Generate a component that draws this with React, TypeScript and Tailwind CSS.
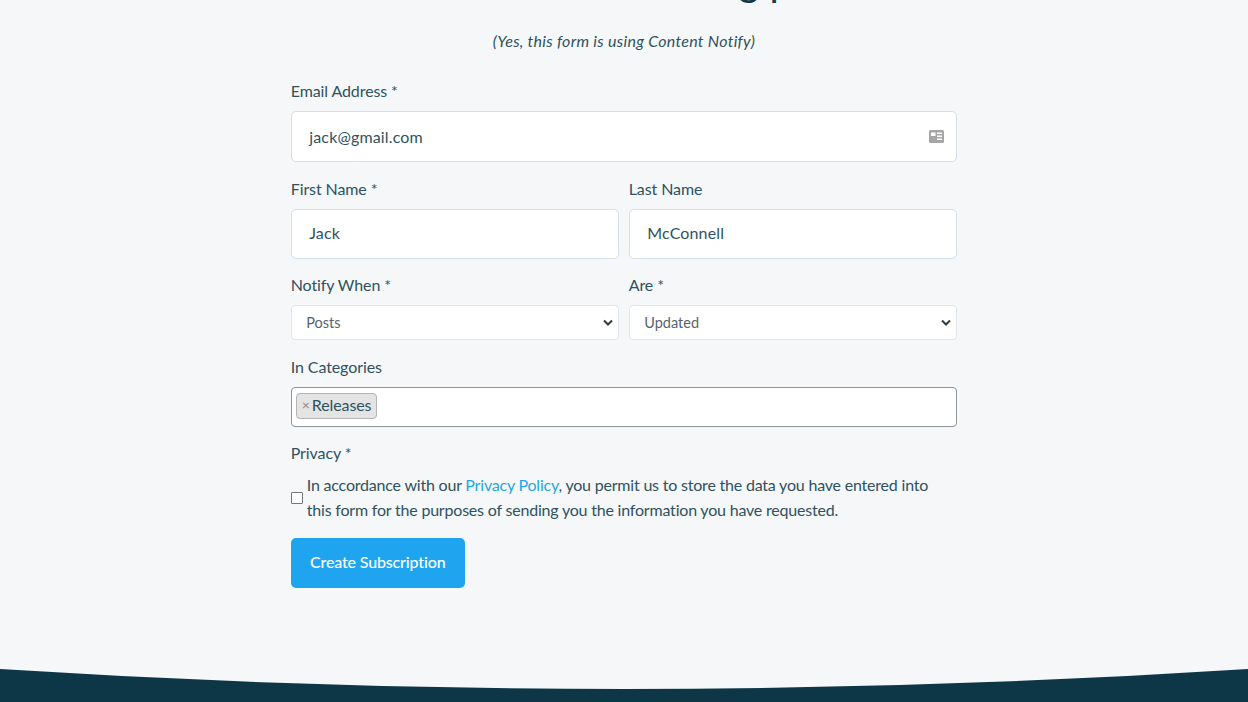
import React from "react";

function Label({ children }: { children: React.ReactNode }) {
  return <label className="block h-[24px] text-[16px] leading-[24px] tracking-[-0.1px] text-[#2f5260]">{children}</label>;
}

function TextInput({ value, icon, tall }: { value: string; icon?: boolean; tall?: boolean }) {
  return (
    <div className={`relative mt-[8px] flex items-center rounded-[5px] border-[1.5px] border-[#d3dfe9] bg-white pl-[17.5px] text-[16px] tracking-[0.15px] text-[#2f5260] ${tall ? "h-[51px]" : "h-[50px] pb-[2px]"}`}>
      {value}
      {icon && (
        <svg className="absolute right-[12px] top-[17.5px]" width="15" height="13" viewBox="0 0 15 13" aria-hidden="true">
          <rect width="15" height="13" rx="1.5" fill="#a6a6a6" />
          <path fill="#ffffff" d="M2 2.500h4.500V6H2ZM8 2.500h5V4H8ZM8 5.500h5V7H8ZM8 8.500h5V10H8Z" />
        </svg>
      )}
    </div>
  );
}

function Select({ value }: { value: string }) {
  return (
    <div className="relative mt-[8px] flex h-[35px] items-center rounded-[4px] border-[1.5px] border-[#dfe6ec] bg-white pl-[14.5px] text-[14.5px] text-[#56656c]">
      {value}
      <svg className="absolute right-[5px] top-[13px]" width="10" height="8" viewBox="0 0 10 8" fill="none" stroke="#2f3a40" strokeWidth="2" aria-hidden="true">
        <path d="M1 1.500 5 5.500 9 1.500" />
      </svg>
    </div>
  );
}

export default function App() {
  return (
    <div className="relative h-[702px] w-[1248px] overflow-hidden bg-[#f6f7f9] font-['Lato',sans-serif]">
      <div className="flex h-[669px] w-full flex-col items-center">
        <div className="h-[31px] w-full overflow-hidden">
          <h2 className="mt-[-49px] text-center text-[40px] leading-[60px] text-[#0f3a4a]">Subscribe to our Blog posts</h2>
        </div>
        <p className="h-[20px] text-center text-[16px] italic leading-[20px] tracking-[0.28px] text-[#2f5260]">(Yes, this form is using Content Notify)</p>
        <form className="mt-[28px] w-[666.5px]">
          <Label>Email Address *</Label>
          <TextInput value="jack@gmail.com" icon tall />
          <div className="mt-[15px] grid grid-cols-2 gap-[9.5px]">
            <div>
              <Label>First Name *</Label>
              <TextInput value="Jack" />
            </div>
            <div>
              <Label>Last Name</Label>
              <TextInput value="McConnell" />
            </div>
          </div>
          <div className="mt-[14px] grid grid-cols-2 gap-[9.5px]">
            <div>
              <Label>Notify When *</Label>
              <Select value="Posts" />
            </div>
            <div>
              <Label>Are *</Label>
              <Select value="Updated" />
            </div>
          </div>
          <div className="mt-[15px]">
            <Label>In Categories</Label>
            <div className="mt-[8px] flex h-[40px] items-center rounded-[4px] border border-[#8f9599] bg-white pl-[4px]">
              <span className="mt-[-3px] flex h-[26px] items-center rounded-[4px] border border-[#b5b5b5] bg-[#e4e4e4] pb-[2px] pl-[5px] pr-[5px] text-[16px] tracking-[-0.1px] text-[#2f5260]">
                <span className="mr-[2px] text-[14px] text-[#8a8a8a]">×</span>Releases
              </span>
            </div>
          </div>
          <div className="mt-[14px]">
            <Label>Privacy *</Label>
            <div className="mt-[8px] flex items-center">
              <span className="mr-[4px] h-[12px] w-[12px] shrink-0 rounded-[1px] border border-[#767676] bg-white" />
              <p className="text-[16px] leading-[24.500px] tracking-[-0.2px] text-[#2f5260]">
                In accordance with our <a className="text-[#1ea7e6]">Privacy Policy</a>, you permit us to store the data you have entered into
                <br />
                this form for the purposes of sending you the information you have requested.
              </p>
            </div>
          </div>
          <button type="button" className="mt-[16px] h-[50px] w-[174px] rounded-[5px] bg-[#1fa5f0] pb-[2px] text-[16px] font-medium tracking-[-0.15px] text-white">
            Create Subscription
          </button>
        </form>
      </div>
      <svg className="absolute bottom-0 left-0" width="1248" height="33" viewBox="0 0 1248 33" aria-hidden="true">
        <path fill="#0d3747" d="M0 0Q624 40 1248 0V33H0Z" />
      </svg>
    </div>
  );
}
